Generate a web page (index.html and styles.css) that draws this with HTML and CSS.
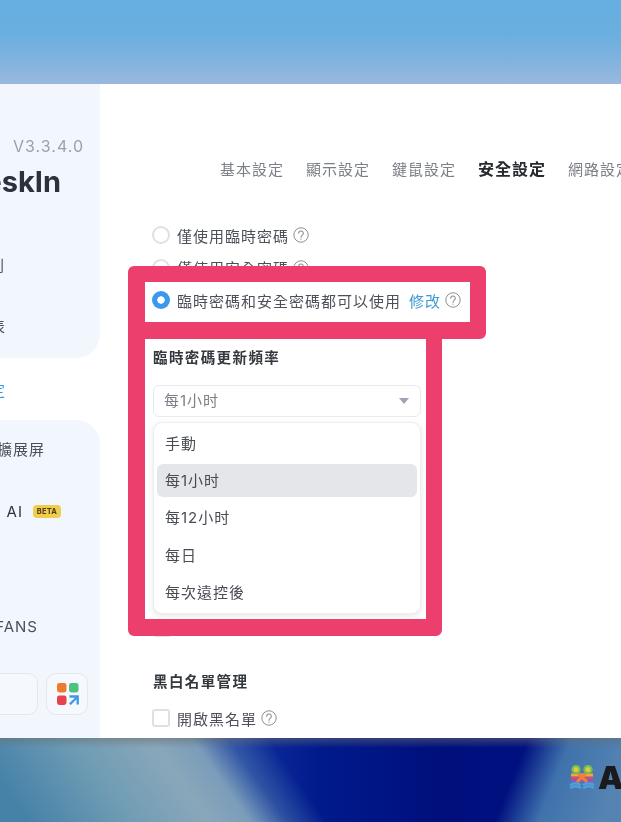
FILE: index.html
```html
<!DOCTYPE html>
<html lang="zh-Hant">
<head>
<meta charset="utf-8">
<title>安全設定</title>
<link rel="stylesheet" href="styles.css">
</head>
<body>
<svg class="defs" width="0" height="0" aria-hidden="true">
  <symbol id="help" viewBox="0 0 16 16">
    <circle cx="8" cy="8" r="7.2" fill="none" stroke="currentColor" stroke-width="1"/>
    <path d="M5.7 6.3a2.3 2.3 0 1 1 3.7 1.8c-.8.6-1.4 1-1.4 2.1" fill="none" stroke="currentColor" stroke-width="1.1" stroke-linecap="round"/>
    <circle cx="8" cy="12.1" r=".7" fill="currentColor"/>
  </symbol>
</svg>
<div class="page">
  <div class="sky"></div>
  <div class="window">
    <aside class="sidebar">
      <div class="panel panel-top">
        <div class="row version">V3.3.4.0</div>
        <div class="row brand">eskIn</div>
        <div class="row nav nav-first">則</div>
        <div class="row nav nav-next">表</div>
      </div>
      <div class="row current"><span>定</span></div>
      <div class="panel panel-bottom">
        <div class="row nav screen">擴展屏</div>
        <div class="row nav ai">AI <span class="beta">BETA</span></div>
        <div class="row nav fans">FANS</div>
        <div class="foot">
          <div class="search"></div>
          <div class="apps">
            <svg width="22" height="22" viewBox="0 0 22 22">
              <rect x="0" y="0" width="9.5" height="9.5" rx="2.4" fill="#ee7b2c"/>
              <rect x="12" y="0" width="9.5" height="9.5" rx="2.4" fill="#4cc27c"/>
              <rect x="0" y="12.5" width="9.5" height="9.5" rx="2.4" fill="#e6434e"/>
              <path d="M12.5 13.5h8.2v8M20.5 13.7l-7.6 7.6" fill="none" stroke="#3f97ec" stroke-width="2.3"/>
            </svg>
          </div>
        </div>
      </div>
    </aside>
    <main class="main">
      <nav class="tabs">
        <span class="tab">基本設定</span>
        <span class="tab">顯示設定</span>
        <span class="tab">鍵鼠設定</span>
        <span class="tab tab-active">安全設定</span>
        <span class="tab">網路設定</span>
      </nav>
      <div class="options">
        <div class="option"><span class="radio"></span><span>僅使用臨時密碼</span><svg class="help"><use href="#help"/></svg></div>
        <div class="option"><span class="radio"></span><span>僅使用安全密碼</span><svg class="help"><use href="#help"/></svg></div>
        <div class="option"><span class="radio radio-on"></span><span>臨時密碼和安全密碼都可以使用</span><a class="link">修改</a><svg class="help"><use href="#help"/></svg></div>
      </div>
      <h3 class="title title-freq">臨時密碼更新頻率</h3>
      <div class="select-wrap">
        <div class="select"><span>每1小时</span><i class="caret"></i></div>
        <ul class="menu">
          <li>手動</li>
          <li class="on">每1小时</li>
          <li>每12小时</li>
          <li>每日</li>
          <li>每次遠控後</li>
        </ul>
      </div>
      <div class="hidden-row"><span class="check"></span><svg class="help"><use href="#help"/></svg></div>
      <h3 class="title title-list">黑白名單管理</h3>
      <div class="option option-check"><span class="check"></span><span>開啟黑名單</span><svg class="help"><use href="#help"/></svg></div>
    </main>
  </div>
  <div class="desk">
    <svg class="logo" width="26" height="25" viewBox="0 0 26 25">
      <path d="M1 20q6-3.5 11 0M14 20q6-3.5 11 0M1 23q6-3.5 11 0M14 23q6-3.5 11 0" fill="none" stroke="#4f9fdc" stroke-width="2.4"/>
      <path d="M2 16h22" stroke="#8a5ac0" stroke-width="2.4"/>
      <path d="M2 13h22" stroke="#e0486a" stroke-width="2.6"/>
      <path d="M2 10h22" stroke="#f2a53a" stroke-width="3"/>
      <path d="M8 7l10 10M18 7L8 17" stroke="#ef7f3a" stroke-width="3"/>
      <circle cx="7" cy="4.5" r="3.6" fill="#e3c93f" stroke="#72bd55" stroke-width="2.2"/>
      <circle cx="19" cy="4.5" r="3.6" fill="#e3c93f" stroke="#72bd55" stroke-width="2.2"/>
    </svg>
    <span class="mark">A</span>
  </div>
  <svg class="annotation" width="621" height="822" viewBox="0 0 621 822" aria-hidden="true">
    <path fill-rule="evenodd" fill="#ec3f6e" d="M134 266H480a6 6 0 0 1 6 6V333a6 6 0 0 1-6 6H442V630a6 6 0 0 1-6 6H134a6 6 0 0 1-6-6V272a6 6 0 0 1 6-6ZM145 282V322H470V282ZM145 339V619H426V339Z"/>
  </svg>
</div>
</body>
</html>
```

FILE: styles.css
```css
* { box-sizing: border-box; }
html, body { margin: 0; padding: 0; }
body {
  width: 621px;
  height: 822px;
  overflow: hidden;
  font-family: Inter, "Noto Sans CJK TC", sans-serif;
  font-size: 15px;
  color: #4c5058;
}
.defs { position: absolute; }
.page {
  position: relative;
  width: 621px;
  height: 822px;
  display: flex;
  flex-direction: column;
  overflow: hidden;
  filter: blur(0.35px);
}
.sky {
  height: 84px;
  flex: none;
  background: linear-gradient(180deg, #66afe0 0, #69afe0 40%, #7fb2df 70%, #9ab8dd 100%);
}
.window {
  height: 654px;
  flex: none;
  display: flex;
  background: #fff;
  overflow: hidden;
}
.sidebar {
  width: 100px;
  flex: none;
  display: flex;
  flex-direction: column;
  overflow: hidden;
}
.panel { background: #f2f7fe; flex: none; }
.panel-top {
  height: 274px;
  padding-top: 52px;
  border-bottom-right-radius: 24px;
}
.panel-bottom {
  height: 318px;
  padding-top: 18px;
  border-top-right-radius: 24px;
}
.row {
  display: flex;
  justify-content: flex-end;
  align-items: center;
  white-space: nowrap;
  height: 20px;
  letter-spacing: 1px;
}
.version {
  padding-right: 16px;
  color: #9aa1a9;
  font-size: 16px;
  letter-spacing: 1px;
}
.brand {
  height: 36px;
  margin-top: 7px;
  padding-right: 39px;
  color: #2b323c;
  font-size: 29px;
  font-weight: 700;
  letter-spacing: 0;
}
.nav-first { margin-top: 55px; padding-right: 95px; }
.nav-next { margin-top: 41px; padding-right: 94px; }
.current {
  height: 62px;
  flex: none;
  padding-right: 94px;
  color: #3e97dc;
}
.screen { padding-right: 55px; }
.ai {
  margin-top: 43px;
  padding-right: 39px;
  color: #30343b;
  gap: 10px;
}
.beta {
  width: 28px;
  height: 13px;
  border-radius: 4px;
  background: #f0cd4e;
  color: #4e3d10;
  font-size: 7.5px;
  font-weight: 700;
  letter-spacing: 0.2px;
  line-height: 13px;
  text-align: center;
}
.fans { margin-top: 95px; padding-right: 62px; }
.foot {
  margin-top: 37px;
  display: flex;
  justify-content: flex-end;
  gap: 8px;
  padding-right: 12px;
}
.search {
  width: 60px;
  height: 42px;
  flex: none;
  border: 1px solid #e4e8ee;
  border-radius: 10px;
  background: #f5f8fd;
}
.apps {
  width: 42px;
  height: 42px;
  flex: none;
  padding-left: 2px;
  border: 1px solid #e4e8ee;
  border-radius: 10px;
  background: #f5f8fd;
  display: flex;
  align-items: center;
  justify-content: center;
}
.main {
  flex: 1;
  min-width: 0;
  padding: 74px 0 0 52px;
  overflow: hidden;
}
.tabs {
  display: flex;
  align-items: center;
  gap: 22px;
  height: 20px;
  margin-left: 68px;
  white-space: nowrap;
}
.tab { color: #7b7f86; letter-spacing: 1px; flex: none; }
.tab-active { color: #26292f; font-weight: 700; font-size: 16px; letter-spacing: 1px; }
.options { margin-top: 41px; }
.option {
  display: flex;
  align-items: center;
  height: 32.5px;
  white-space: nowrap;
  letter-spacing: 1px;
}
.radio {
  width: 18px;
  height: 18px;
  flex: none;
  margin-right: 7px;
  border: 2px solid #dfe0e3;
  border-radius: 50%;
  background: #fff;
}
.radio-on {
  border: 0;
  background: radial-gradient(circle, #fff 0 3.4px, #3c97ee 4px);
}
.help {
  width: 16px;
  height: 16px;
  flex: none;
  margin-left: 4px;
  color: #8b8f96;
}
.link { margin-left: 8px; color: #3f9ad6; }
.title {
  margin: 0;
  font-size: 14.5px;
  line-height: 20px;
  font-weight: 700;
  letter-spacing: 1.4px;
  color: #33373e;
}
.title-freq { margin-top: 31.5px; margin-left: 1px; }
.select-wrap {
  position: relative;
  margin: 17px 0 0 1px;
  width: 268px;
}
.select {
  height: 32px;
  display: flex;
  align-items: center;
  justify-content: space-between;
  padding: 0 11px 3px 10px;
  border: 1px solid #e7e9ec;
  border-radius: 6px;
  color: #7d8087;
  letter-spacing: 1px;
}
.caret {
  width: 0;
  height: 0;
  margin-top: 3px;
  border-left: 5.5px solid transparent;
  border-right: 5.5px solid transparent;
  border-top: 6.5px solid #9ba6b6;
}
.menu {
  position: absolute;
  top: 37px;
  left: 0;
  width: 268px;
  height: 192px;
  margin: 0;
  padding: 2px 3px;
  list-style: none;
  background: #fff;
  border: 1px solid #eceef0;
  border-radius: 9px;
  box-shadow: 0 2px 6px rgba(60, 60, 70, .13);
}
.menu li {
  height: 37.3px;
  display: flex;
  align-items: center;
  padding: 0 0 2px 8px;
  color: #484c53;
  letter-spacing: 1px;
}
.menu li.on { height: 33px; margin: 2px 0; background: #e5e6e9; border-radius: 6px; }
.hidden-row {
  margin: 202px 0 0 1px;
  width: 252px;
  height: 18px;
  display: flex;
  justify-content: space-between;
}
.check {
  width: 18px;
  height: 18px;
  flex: none;
  margin-right: 7px;
  border: 2px solid #dfe0e3;
  border-radius: 3px;
  background: #fff;
}
.title-list { margin-top: 35px; margin-left: 1px; }
.option-check { margin-top: 13px; height: 26px; }
.desk {
  height: 84px;
  flex: none;
  display: flex;
  justify-content: flex-end;
  align-items: flex-start;
  overflow: hidden;
  padding-top: 27px;
  background:
    linear-gradient(180deg, rgba(105, 110, 115, .5) 0, rgba(105, 110, 115, 0) 10px),
    linear-gradient(55deg, #4682a8 24px, #6f9cb4 106px, #8aa7ba 171px, #7b9dba 205px, rgba(70, 110, 170, .6) 235px, rgba(10, 40, 150, 0) 268px),
    linear-gradient(112deg, rgba(60, 110, 170, 0) 490px, #3f72ac 530px, #5684b2 591px),
    linear-gradient(90deg, #12309e 240px, #001a8c 320px, #000f7c 440px, #001080 520px);
}
.logo { flex: none; margin-right: 3px; margin-top: 0; }
.mark {
  flex: none;
  width: 23px;
  font-family: Inter, "Liberation Sans", sans-serif;
  font-size: 32px;
  font-weight: 900;
  line-height: 26px;
  color: #1a1a1e;
}
.annotation {
  position: absolute;
  left: 0;
  top: 0;
}
```
